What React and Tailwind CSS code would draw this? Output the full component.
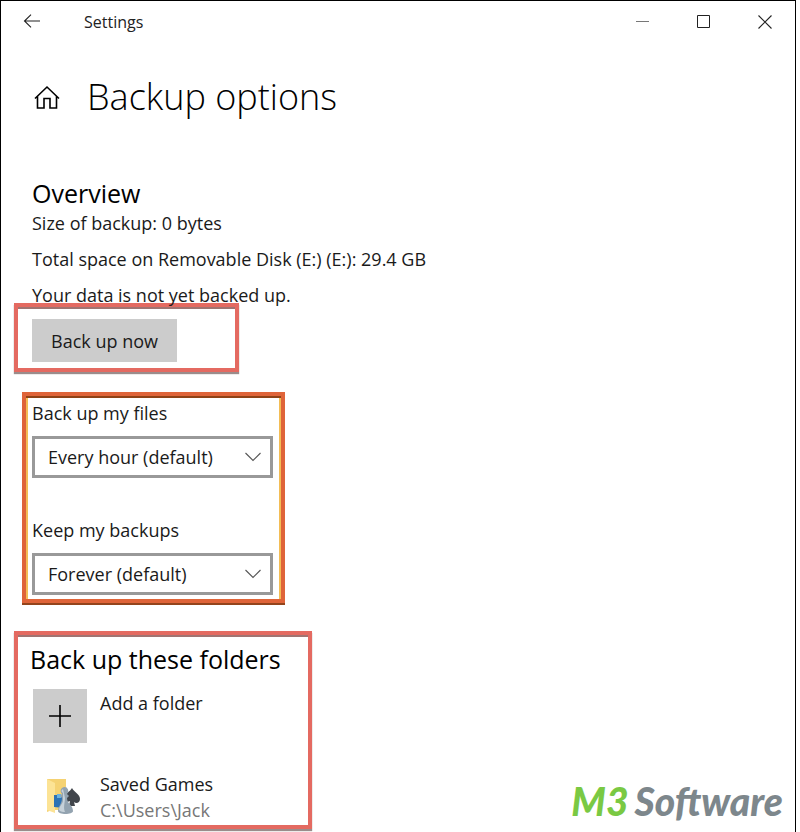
import { useState } from "react";

const redBox = "border-4 border-[#e46a61] shadow-[inset_0_2px_0_#a07472,0_2px_1px_#9b8c8b]";

const orangeBox =
  "border-4 border-[#df6439] shadow-[inset_0_2px_0_#8f4216,inset_2px_0_0_#f3bd55,inset_-2px_0_0_#f3bd55,0_2px_0_#93441c]";

function TitleBar() {
  return (
    <header className="flex h-10.5 items-center justify-between pl-[19px] text-[#222]">
      <div className="flex items-center">
        <button aria-label="Back" className="mr-10 flex h-6 w-6 items-center justify-center">
          <svg width="18" height="16" viewBox="0 0 18 16" fill="none" stroke="currentColor" strokeWidth="1.1">
            <path d="M17 7H1.5M8 .7 1.500 7 8 13.300" />
          </svg>
        </button>
        <span className="text-base">Settings</span>
      </div>
      <div className="flex">
        <button aria-label="Minimize" className="flex h-10 w-[61px] items-center justify-center">
          <svg width="14" height="14" viewBox="0 0 14 14" stroke="#777">
            <path d="M0 6.5h13" />
          </svg>
        </button>
        <button aria-label="Maximize" className="flex h-10 w-[61px] items-center justify-center">
          <svg width="14" height="14" viewBox="0 0 14 14" fill="none" stroke="currentColor">
            <path d="M.5.5h12v12H.5z" />
          </svg>
        </button>
        <button aria-label="Close" className="flex h-10 w-[61px] items-center justify-center">
          <svg width="14" height="14" viewBox="0 0 14 14" stroke="currentColor" strokeWidth="1.1">
            <path d="m.5.5 13 13M13.5.5l-13 13" />
          </svg>
        </button>
      </div>
    </header>
  );
}

function SelectField({ id, label, options }) {
  const [value, setValue] = useState(options[0]);

  return (
    <div>
      <label htmlFor={id} className="block text-lg leading-[26px]">
        {label}
      </label>
      <div className="mt-2.5 grid items-center">
        <select
          id={id}
          value={value}
          onChange={(e) => setValue(e.target.value)}
          className="col-start-1 row-start-1 h-[42px] w-full appearance-none border-[3px] border-[#999] bg-white pl-[13px] text-lg"
        >
          {options.map((option) => (
            <option key={option}>{option}</option>
          ))}
        </select>
        <svg
          className="pointer-events-none col-start-1 row-start-1 mr-3 justify-self-end"
          width="16"
          height="10"
          viewBox="0 0 16 10"
          fill="none"
          stroke="#555"
          strokeWidth="1.1"
        >
          <path d="m.5 1 7.5 7.5L15.500 1" />
        </svg>
      </div>
    </div>
  );
}

function SavedGamesIcon() {
  return (
    <svg width="38" height="38" viewBox="0 0 38 38">
      <path d="M4 1h19v31H9l-5 2z" fill="#f5d272" />
      <path d="M4 1l8 4v30l-8-3z" fill="#fce395" />
      <path d="M11 17h10v13l-10-1z" fill="#2c72b4" />
      <path d="M14 16h4v4h-4z" fill="#69b2df" />
      <path d="M29 10c2 4 8 6 8 11 0 4-4 5-6 3l1 4h-6l1-5c-4 2-5-1-5-4 0-4 5-5 7-9z" fill="#41454b" />
      <path d="M21 9a4 4 0 0 1 3 7l2 2-2 2c0 6 6 7 6 13 0 4-15 4-15 0 0-5 4-7 4-13l-2-2 2-2a4 4 0 0 1 2-7z" fill="#93a3b0" />
      <path d="M20 11c-2 1-2 3 0 4v7c0 4-4 6-4 10 2 2 4 2 6 2-2-5 0-9 0-14z" fill="#c6d1d9" />
    </svg>
  );
}

export default function App() {
  return (
    <div className="mr-1 min-h-screen border border-b-0 border-black bg-white font-['Open_Sans','Noto_Sans',sans-serif] text-[#1a1a1a]">
      <TitleBar />

      <main>
        <div className="mt-6.5 flex items-center gap-[27px] pl-[33px]">
          <svg width="26" height="24" viewBox="0 0 26 24" fill="none" stroke="black" strokeWidth="1.6">
            <path d="M1 13.500 13 2l12 11.500M3.500 11.500V23H10v-9.500h6V23h6.500V11.500" />
          </svg>
          <h1 className="text-4xl leading-[56px] font-light text-black">Backup options</h1>
        </div>

        <section className="mt-13 pl-[31px]">
          <h2 className="text-[25px] leading-8 text-black">Overview</h2>
          <p className="text-lg leading-7">Size of backup: 0 bytes</p>
          <p className="mt-2 text-lg leading-7">Total space on Removable Disk (E:) (E:): 29.4 GB</p>
          <p className="mt-2 text-lg leading-7">Your data is not yet backed up.</p>
        </section>

        <div className={`-mt-1.5 ml-[13px] w-[225px] px-3.5 pt-3 pb-1.5 ${redBox}`}>
          <button className="block h-[43px] w-[145px] bg-[#ccc] text-lg">Back up now</button>
        </div>

        <section className={`mt-5 ml-[21px] w-[263px] pt-1 pr-2 pb-1 pl-1.5 ${orangeBox}`}>
          <SelectField id="frequency" label="Back up my files" options={["Every hour (default)", "Daily"]} />
          <div className="mt-[39px]">
            <SelectField id="retention" label="Keep my backups" options={["Forever (default)", "1 year"]} />
          </div>
        </section>

        <div className="mt-7 flex items-end justify-between">
          <section className={`ml-[13px] w-[298px] pt-2 pb-0.5 pl-3 ${redBox}`}>
            <h2 className="text-[25px] leading-8 text-black">Back up these folders</h2>
            <div className="pl-[3px]">
              <button className="mt-3.5 flex gap-[13px] text-left text-lg leading-7">
                <span className="flex h-[54px] w-[54px] items-center justify-center bg-[#ccc]">
                  <svg width="22" height="22" viewBox="0 0 22 22" stroke="black" strokeWidth="1.6">
                    <path d="M0 11h22M11 0v22" />
                  </svg>
                </span>
                Add a folder
              </button>
              <div className="mt-7 flex items-center gap-[13px]">
                <div className="flex w-[54px] justify-end pr-1.5">
                  <SavedGamesIcon />
                </div>
                <div className="text-lg leading-[26px]">
                  <p>Saved Games</p>
                  <p className="text-[#777]">C:\Users\Jack</p>
                </div>
              </div>
            </div>
          </section>
          <p className="mr-3 mb-1.5 flex gap-1.5 font-[Lato] text-[39px] leading-[44px] font-black text-[#7d878c] italic">
            <span className="text-[#7ac943]">M3</span>
            <span>Software</span>
          </p>
        </div>
      </main>
    </div>
  );
}
